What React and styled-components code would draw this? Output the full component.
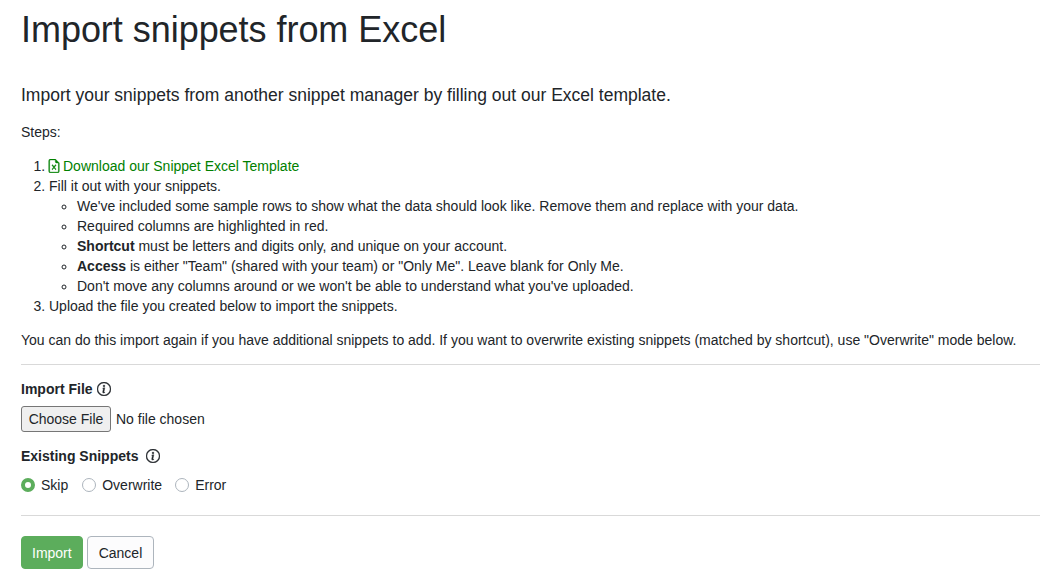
import React from "react";
import styled, { createGlobalStyle } from "styled-components";

const GlobalStyle = createGlobalStyle`
  html, body { margin: 0; padding: 0; background: #fff; }
  body {
    font-family: "Liberation Sans", Arial, sans-serif;
    font-size: 14px;
    line-height: 20px;
    color: #212529;
    overflow: hidden;
  }
`;

const Page = styled.div`
  width: 1040px;
  height: 581px;
  padding: 0 0 0 21px;
  box-sizing: border-box;
  overflow: hidden;
`;

const Title = styled.h1`
  margin: 8px 0 0;
  font-size: 36px;
  font-weight: 400;
  line-height: 43px;
  letter-spacing: -0.04px;
`;

const Lead = styled.p`
  margin: 34px 0 0;
  font-size: 17.5px;
  line-height: 21px;
`;

const Para = styled.p`
  margin: ${(p) => p.$top}px 0 0;
`;

const Steps = styled.ol`
  margin: 14px 0 0;
  padding: 0 0 0 28px;
`;

const SubList = styled.ul`
  margin: 0;
  padding: 0 0 0 28px;
  list-style: circle;
`;

const Link = styled.a`
  color: #008000;
  text-decoration: none;
`;

const FileGlyph = styled.svg`
  vertical-align: -2px;
  margin: 0 2px 0 -2px;
`;

const Rule = styled.hr`
  border: 0;
  border-top: 1px solid #d9d9d9;
  margin: ${(p) => p.$top}px 0 0;
`;

const Label = styled.div`
  margin-top: ${(p) => p.$top}px;
  display: flex;
  align-items: center;
  gap: ${(p) => p.$gap}px;
  font-weight: 700;
`;

const FileRow = styled.div`
  margin-top: 7px;
  display: flex;
  align-items: center;
  height: 26px;
`;

const FileButton = styled.button`
  height: 26px;
  width: 90px;
  padding: 0;
  font: inherit;
  color: #212529;
  background: #efefef;
  border: 1px solid #767676;
  border-radius: 3px;
`;

const FileText = styled.span`
  margin-left: 5px;
`;

const RadioRow = styled.div`
  margin-top: 9px;
  display: flex;
  align-items: center;
`;

const RadioItem = styled.label`
  display: flex;
  align-items: center;
  gap: 6px;
  margin-right: ${(p) => p.$after || 14}px;
`;

const RadioDot = styled.span`
  box-sizing: border-box;
  width: 14px;
  height: 14px;
  border-radius: 50%;
  border: ${(p) => (p.$on ? "4px solid #5cad5c" : "1px solid #adb5bd")};
  background: #fff;
`;

const Actions = styled.div`
  margin-top: 20px;
  display: flex;
  gap: 4px;
`;

const Button = styled.button`
  height: 33px;
  padding: ${(p) => (p.$primary ? "0 10px" : "0 11px")};
  font: inherit;
  border-radius: 4px;
  border: 1px solid ${(p) => (p.$primary ? "#5cad5c" : "#adb5bd")};
  background: ${(p) => (p.$primary ? "#5cad5c" : "#fcfcfd")};
  color: ${(p) => (p.$primary ? "#fff" : "#212529")};
`;

const InfoIcon = () => (
  <svg width="14" height="14" viewBox="0 0 16 16" fill="currentColor" stroke="currentColor" strokeWidth="0.5">
    <path d="M8 15A7 7 0 1 1 8 1a7 7 0 0 1 0 14zm0 1A8 8 0 1 0 8 0a8 8 0 0 0 0 16z" />
    <path d="m8.93 6.59-2.29.28-.08.38.45.08c.29.07.35.18.29.47l-.74 3.47c-.19.9.1 1.32.81 1.32.55 0 1.2-.26 1.49-.61l.09-.42c-.2.18-.5.25-.69.25-.28 0-.38-.2-.31-.54l1-4.68zM9 4.5a1 1 0 1 1-2 0 1 1 0 0 1 2 0z" />
  </svg>
);

const ExcelIcon = () => (
  <FileGlyph width="14" height="14" viewBox="0 0 16 16" fill="#008000" stroke="#008000" strokeWidth="0.5">
    <path d="M14 14V4.5L9.5 0H4a2 2 0 0 0-2 2v12a2 2 0 0 0 2 2h8a2 2 0 0 0 2-2zM9.5 3A1.5 1.5 0 0 0 11 4.5h2V14a1 1 0 0 1-1 1H4a1 1 0 0 1-1-1V2a1 1 0 0 1 1-1h5.5v2z" />
    <path d="M5.88 6.68a.5.5 0 0 1 .7.08L8 8.54l1.42-1.78a.5.5 0 1 1 .78.62L8.64 9.34l1.56 1.96a.5.5 0 1 1-.78.62L8 10.14l-1.42 1.78a.5.5 0 1 1-.78-.62l1.56-1.96L5.8 7.38a.5.5 0 0 1 .08-.7z" />
  </FileGlyph>
);

export default function App() {
  return (
    <Page>
      <GlobalStyle />
      <Title>Import snippets from Excel</Title>
      <Lead>Import your snippets from another snippet manager by filling out our Excel template.</Lead>
      <Para $top={16}>Steps:</Para>
      <Steps>
        <li>
          <Link href="#"><ExcelIcon />Download our Snippet Excel Template</Link>
        </li>
        <li>
          Fill it out with your snippets.
          <SubList>
            <li>We've included some sample rows to show what the data should look like. Remove them and replace with your data.</li>
            <li>Required columns are highlighted in red.</li>
            <li><b>Shortcut</b> must be letters and digits only, and unique on your account.</li>
            <li><b>Access</b> is either "Team" (shared with your team) or "Only Me". Leave blank for Only Me.</li>
            <li>Don't move any columns around or we won't be able to understand what you've uploaded.</li>
          </SubList>
        </li>
        <li>Upload the file you created below to import the snippets.</li>
      </Steps>
      <Para $top={14}>You can do this import again if you have additional snippets to add. If you want to overwrite existing snippets (matched by shortcut), use "Overwrite" mode below.</Para>
      <Rule $top={14} />
      <Label $top={14} $gap={4}>Import File <InfoIcon /></Label>
      <FileRow>
        <FileButton>Choose File</FileButton>
        <FileText>No file chosen</FileText>
      </FileRow>
      <Label $top={14} $gap={8}>Existing Snippets <InfoIcon /></Label>
      <RadioRow>
        <RadioItem><RadioDot $on />Skip</RadioItem>
        <RadioItem $after={13}><RadioDot />Overwrite</RadioItem>
        <RadioItem><RadioDot />Error</RadioItem>
      </RadioRow>
      <Rule $top={20} />
      <Actions>
        <Button $primary>Import</Button>
        <Button>Cancel</Button>
      </Actions>
    </Page>
  );
}
